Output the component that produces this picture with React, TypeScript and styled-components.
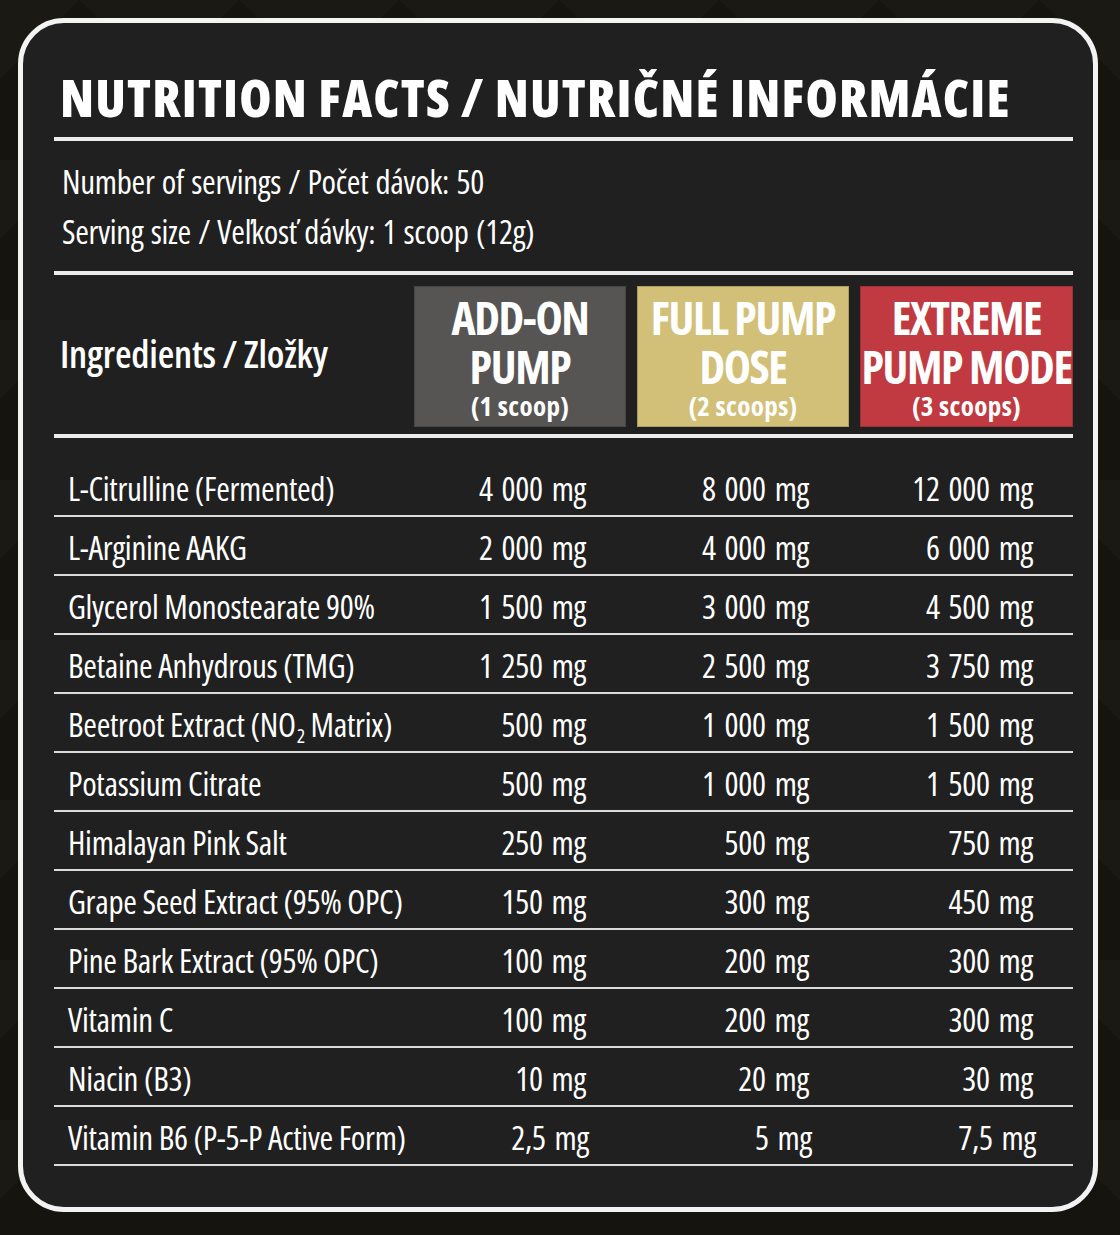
import React from 'react';
import styled, { createGlobalStyle } from 'styled-components';

const GlobalStyle = createGlobalStyle`
  * { box-sizing: border-box; }
  body {
    margin: 0;
    background: #16140f;
    font-family: 'Open Sans', 'Liberation Sans', sans-serif;
    font-stretch: 75%;
    color: #fff;
  }
`;

const Sub = styled.sub`
  font-size: 0.6em;
  line-height: 0;
  vertical-align: -0.3em;
  margin-left: 1px;
`;

const doses = [
  { title: ['ADD-ON', 'PUMP'], note: '(1 scoop)', color: '#575553' },
  { title: ['FULL PUMP', 'DOSE'], note: '(2 scoops)', color: '#d2c078' },
  { title: ['EXTREME', 'PUMP MODE'], note: '(3 scoops)', color: '#c13a41' },
];

const rows: [React.ReactNode, string, string, string][] = [
  ['L-Citrulline (Fermented)', '4 000 mg', '8 000 mg', '12 000 mg'],
  ['L-Arginine AAKG', '2 000 mg', '4 000 mg', '6 000 mg'],
  ['Glycerol Monostearate 90%', '1 500 mg', '3 000 mg', '4 500 mg'],
  ['Betaine Anhydrous (TMG)', '1 250 mg', '2 500 mg', '3 750 mg'],
  [<>Beetroot Extract (NO<Sub>2</Sub> Matrix)</>, '500 mg', '1 000 mg', '1 500 mg'],
  ['Potassium Citrate', '500 mg', '1 000 mg', '1 500 mg'],
  ['Himalayan Pink Salt', '250 mg', '500 mg', '750 mg'],
  ['Grape Seed Extract (95% OPC)', '150 mg', '300 mg', '450 mg'],
  ['Pine Bark Extract (95% OPC)', '100 mg', '200 mg', '300 mg'],
  ['Vitamin C', '100 mg', '200 mg', '300 mg'],
  ['Niacin (B3)', '10 mg', '20 mg', '30 mg'],
  ['Vitamin B6 (P-5-P Active Form)', '2,5 mg', '5 mg', '7,5 mg'],
];

const App = () => {
  return (
    <Page>
      <GlobalStyle />
      <Card>
        <Title>NUTRITION FACTS / NUTRIČNÉ INFORMÁCIE</Title>
        <Rule />
        <Servings>
          <div>Number of servings / Počet dávok: 50</div>
          <div>Serving size / Veľkosť dávky: 1 scoop (12g)</div>
        </Servings>
        <Rule />
        <HeaderRow>
          <HeaderLabel>Ingredients / Zložky</HeaderLabel>
          {doses.map(d => (
            <DoseBox key={d.note} $bg={d.color}>
              {d.title.map(t => (
                <DoseTitle key={t}>{t}</DoseTitle>
              ))}
              <DoseNote>{d.note}</DoseNote>
            </DoseBox>
          ))}
        </HeaderRow>
        <Rule />
        <Body>
          {rows.map(([name, a, b, c], i) => (
            <Row key={i}>
              <Name>{name}</Name>
              <Value>{a}</Value>
              <Value>{b}</Value>
              <Value>{c}</Value>
            </Row>
          ))}
        </Body>
      </Card>
    </Page>
  );
};

const Page = styled.div`
  min-height: 1235px;
  padding: 18px 22px 23px 18px;
  background:
    linear-gradient(135deg, rgba(255, 255, 255, 0.02) 25%, transparent 25%) 0 0 / 160px 160px,
    linear-gradient(225deg, rgba(255, 255, 255, 0.02) 25%, transparent 25%) 0 0 / 160px 160px,
    #16140f;
`;

const Card = styled.div`
  border: 5px solid #f3f3f3;
  border-radius: 46px;
  background: #202020;
  padding: 48px 20px 41px 31px;
`;

const Title = styled.h1`
  margin: 0 0 14px 6px;
  font-size: 52px;
  line-height: 1;
  font-weight: 800;
  letter-spacing: 1.2px;
  white-space: nowrap;
`;

const Rule = styled.div`
  height: 4px;
  background: #ececec;
`;

const Servings = styled.div`
  padding: 16px 0 14px 8px;
  font-size: 33px;
  line-height: 50px;
  letter-spacing: -0.3px;
  word-spacing: 1.5px;
`;

const Cols = `
  display: grid;
  grid-template-columns: 1fr 212px 212px 213px;
  column-gap: 11px;
`;

const HeaderRow = styled.div`
  ${Cols}
  margin: 11px 0 7px;
`;

const HeaderLabel = styled.div`
  align-self: center;
  padding: 0 0 8px 6px;
  font-size: 38px;
  font-weight: 600;
  letter-spacing: -0.2px;
`;

const DoseBox = styled.div<{ $bg: string }>`
  height: 141px;
  padding-top: 6px;
  background: ${p => p.$bg};
  border: 1px solid rgba(0, 0, 0, 0.18);
  display: flex;
  flex-direction: column;
  align-items: center;
  text-align: center;
`;

const DoseTitle = styled.div`
  font-size: 46px;
  line-height: 49px;
  font-weight: 700;
  letter-spacing: -1.4px;
  white-space: nowrap;
`;

const DoseNote = styled.div`
  font-size: 27px;
  line-height: 30px;
  font-weight: 700;
  letter-spacing: 0.4px;
`;

const Body = styled.div`
  padding-top: 20px;
`;

const Row = styled.div`
  ${Cols}
  height: 59px;
  padding-top: 4px;
  border-bottom: 2px solid #dcdcdc;
  font-size: 33px;
  line-height: 53px;
  letter-spacing: -0.3px;
  white-space: nowrap;
`;

const Name = styled.div`
  padding-left: 14px;
`;

const Value = styled.div`
  text-align: right;
  padding-right: 40px;
  word-spacing: 3px;
`;

export default App;
